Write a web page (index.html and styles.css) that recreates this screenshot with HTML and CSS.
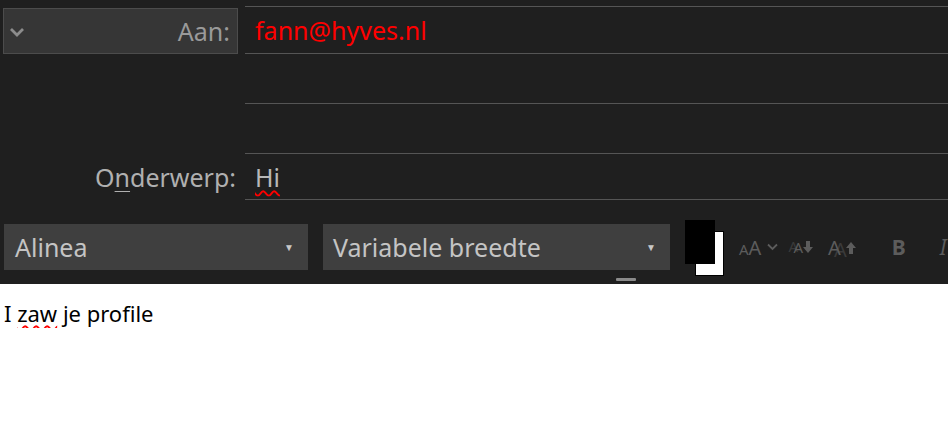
FILE: index.html
```html
<!DOCTYPE html>
<html lang="nl">
<head>
    <meta charset="UTF-8">
    <title>Bericht</title>
    <link rel="stylesheet" href="styles.css">
</head>
<body>
    <div class="compose">
        <div class="row row-to">
            <div class="label">
                <div class="toBox">
                    <svg class="chev" width="16" height="11" viewBox="0 0 16 11"><path d="M2 2 L8 8 L14 2" fill="none" stroke="#8c8c8c" stroke-width="2.8"/></svg>
                    <span>Aan:</span>
                </div>
            </div>
            <div class="field field-first"><span class="address">fann@hyves.nl</span></div>
        </div>
        <div class="row row-blank"><div class="label"></div><div class="field"></div></div>
        <div class="row row-blank"><div class="label"></div><div class="field"></div></div>
        <div class="row row-subject">
            <div class="label subjectLabel">O<u>n</u>derwerp:</div>
            <div class="field"><span class="typo">Hi</span></div>
        </div>

        <div class="toolbar">
            <div class="dropdown dd-style">
                <span>Alinea</span><span class="caret">▼</span>
            </div>
            <div class="dropdown dd-font">
                <span>Variabele breedte</span><span class="caret">▼</span>
            </div>
            <div class="swatch">
                <div class="swBack"></div>
                <div class="swFront"></div>
            </div>
            <div class="tools">
                <span class="tool case"><small>A</small>A</span>
                <svg class="tiny" width="11" height="8" viewBox="0 0 11 8"><path d="M1 1.5 L5.5 6 L10 1.5" fill="none" stroke="#5c5c5c" stroke-width="1.8"/></svg>
                <span class="tool shrink"><span class="ghostBig">A</span><svg width="10" height="13" viewBox="0 0 10 13"><path d="M3 0 H7 V6 H10 L5 12 L0 6 H3 Z" fill="#5c5c5c"/></svg></span>
                <span class="tool grow"><span class="ghostSmall">A</span><svg width="10" height="13" viewBox="0 0 10 13"><path d="M3 13 H7 V7 H10 L5 1 L0 7 H3 Z" fill="#5c5c5c"/></svg></span>
                <span class="tool bold">B</span>
                <span class="tool italic">I</span>
            </div>
        </div>
        <div class="grip"></div>
    </div>

    <div class="message">I <span class="typo">zaw</span> je profile</div>
</body>
</html>
```

FILE: styles.css
```css
body {
    margin: 0;
    padding: 0;
    background-color: #ffffff;
    font-family: "Noto Sans", "Open Sans", sans-serif;
    overflow: hidden;
}

* {
    box-sizing: border-box;
}

.compose {
    position: relative;
    background-color: #1f1f1f;
    padding-top: 6px;
    height: 284px;
}

.row {
    display: flex;
}

.label {
    width: 245px;
    flex-shrink: 0;
}

.field {
    flex: 1;
    border-bottom: 1px solid #555555;
    display: flex;
    align-items: center;
    padding-left: 10px;
    font-size: 25px;
}

.field-first {
    border-top: 1px solid #555555;
}

.row-to {
    height: 48px;
}

.row-blank {
    height: 50px;
}

.row-subject {
    height: 46px;
}

.toBox {
    display: flex;
    align-items: center;
    justify-content: space-between;
    margin: 2px 0 0 3px;
    width: 235px;
    height: 46px;
    background-color: #363636;
    border: 1px solid #4c4c4c;
    padding: 0 7px 0 5px;
    color: #9a9a9a;
    font-size: 25px;
}

.chev {
    margin-top: 2px;
}

.address {
    color: #ff0000;
}

.subjectLabel {
    display: flex;
    align-items: center;
    justify-content: flex-end;
    padding-right: 9px;
    color: #b0b0b0;
    font-size: 25px;
}

.subjectLabel u {
    text-decoration-thickness: 1px;
    text-underline-offset: 4px;
}

.row-subject .field {
    color: #b8b8b8;
}

.typo {
    text-decoration: underline wavy #ff0000;
    text-decoration-thickness: 2px;
    text-underline-offset: 3px;
}

.toolbar {
    display: flex;
    align-items: flex-start;
    padding: 24px 0 0 4px;
    height: 78px;
}

.dropdown {
    display: flex;
    align-items: center;
    justify-content: space-between;
    height: 46px;
    background-color: #3f3f3f;
    color: #c4c4c4;
    font-size: 25px;
    padding: 0 14px 0 11px;
}

.caret {
    font-size: 10px;
    color: #c8c8c8;
}

.dd-style {
    width: 304px;
    margin-right: 15px;
}

.dd-font {
    width: 347px;
    padding-left: 10px;
}

.swatch {
    position: relative;
    width: 40px;
    height: 56px;
    margin: -4px 0 0 15px;
}

.swBack {
    position: absolute;
    left: 10px;
    top: 11px;
    width: 29px;
    height: 45px;
    background-color: #ffffff;
    border: 1px solid #000000;
}

.swFront {
    position: absolute;
    left: 0;
    top: 0;
    width: 30px;
    height: 44px;
    background-color: #000000;
}

.tools {
    display: flex;
    align-items: center;
    height: 46px;
    margin-left: 14px;
    color: #5c5c5c;
    font-size: 20px;
}

.case small {
    font-size: 15px;
}

.tiny {
    margin: 0 10px 0 6px;
}

.shrink {
    display: flex;
    align-items: center;
    margin-right: 15px;
}

.ghostBig {
    font-size: 15px;
    padding-left: 5px;
    text-shadow: -5px -1px 0 #3a3a3a;
}

.grow {
    display: flex;
    align-items: center;
    margin-right: 36px;
}

.ghostSmall {
    font-size: 20px;
    margin-right: 5px;
    text-shadow: 6px 2px 0 #3a3a3a;
}

.bold {
    font-weight: bold;
    font-size: 21px;
    margin-right: 34px;
}

.italic {
    font-style: italic;
    font-size: 21px;
}

.grip {
    position: absolute;
    left: 616px;
    top: 278px;
    width: 20px;
    height: 3px;
    border-radius: 1px;
    background-color: #8a8a8a;
}

.message {
    padding: 14px 0 0 4px;
    font-size: 22px;
    color: #000000;
}
```
